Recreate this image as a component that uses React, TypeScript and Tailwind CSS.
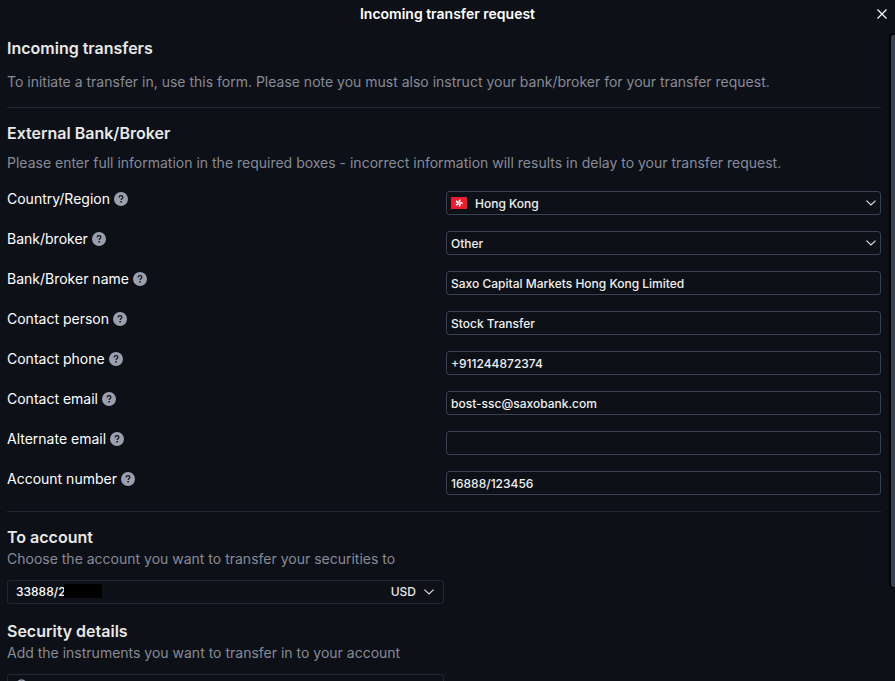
import { useState } from "react";
import type { ReactNode } from "react";

type Field = {
  id: string;
  label: string;
  value: string;
  type?: string;
};

const fields: Field[] = [
  { id: "broker-name", label: "Bank/Broker name", value: "Saxo Capital Markets Hong Kong Limited" },
  { id: "contact-person", label: "Contact person", value: "Stock Transfer" },
  { id: "contact-phone", label: "Contact phone", value: "+911244872374", type: "tel" },
  { id: "contact-email", label: "Contact email", value: "bost-ssc@saxobank.com", type: "email" },
  { id: "alternate-email", label: "Alternate email", value: "", type: "email" },
  { id: "account-number", label: "Account number", value: "16888/123456" },
];

const controlClass =
  "block h-6 w-full appearance-none rounded-[3px] border border-[#384152] bg-transparent px-1 text-xs font-medium text-[#f0f0f0] outline-none focus:border-[#5b6b85]";

function HelpIcon() {
  return (
    <svg width="14" height="14" viewBox="0 0 14 14" fill="none" aria-hidden="true">
      <circle cx="7" cy="7" r="7" fill="#9a9fae" />
      <path
        d="M5.1 5.5C5.1 4.3 5.9 3.7 7 3.7s1.9.6 1.9 1.6C8.9 6.5 7.2 6.5 7.2 8"
        stroke="#0d1017"
        strokeWidth="1.2"
      />
      <rect x="6.4" y="9" width="1.5" height="1.5" fill="#0d1017" />
    </svg>
  );
}

function Chevron() {
  return (
    <svg width="10" height="6" viewBox="0 0 10 6" fill="none" aria-hidden="true">
      <path d="M.4.6 5 5l4.6-4.4" stroke="#e0e0e0" strokeWidth="1.2" />
    </svg>
  );
}

function HongKongFlag() {
  return (
    <svg width="16" height="12" viewBox="0 0 16 12" aria-hidden="true">
      <rect width="16" height="12" fill="#ec1b2e" />
      <g fill="#fff">
        {[20, 92, 164, 236, 308].map((angle) => (
          <path
            key={angle}
            d="M8 5.8C6.2 4.8 6.2 2.5 8.8 2 8 3.2 9.400 4.200 8 5.800z"
            transform={`rotate(${angle} 8 6)`}
          />
        ))}
      </g>
    </svg>
  );
}

function Row({ id, label, children }: { id: string; label: string; children: ReactNode }) {
  return (
    <div className="grid grid-cols-2 gap-1">
      <div className="flex h-4 items-center gap-1">
        <label htmlFor={id} className="text-sm text-white">
          {label}
        </label>
        <button type="button" aria-label={`Help: ${label}`}>
          <HelpIcon />
        </button>
      </div>
      {children}
    </div>
  );
}

export default function App() {
  const [values, setValues] = useState<Record<string, string>>(
    Object.fromEntries(fields.map((f) => [f.id, f.value]))
  );

  return (
    <div className="flex h-screen flex-col overflow-hidden bg-[#0d1017] font-['Inter',sans-serif] text-[#e8e8e8]">
      {/* Title bar */}
      <header className="grid h-7 shrink-0 grid-cols-[1fr_auto_1fr] items-center">
        <h1 className="col-start-2 text-sm font-semibold text-white">Incoming transfer request</h1>
        <button type="button" aria-label="Close" className="mr-2 justify-self-end">
          <svg width="10" height="10" viewBox="0 0 10 10" fill="none">
            <path d="M.5.5l9 9M9.5.5l-9 9" stroke="#fff" strokeWidth="1.2" />
          </svg>
        </button>
      </header>

      <div className="flex min-h-0 flex-1">
        <main className="min-w-0 flex-1 overflow-hidden pr-2 pl-[7px]">
          <section className="border-b border-[#1e2734] pt-2 pb-[15px]">
            <h2 className="text-base font-semibold">Incoming transfers</h2>
            <p className="mt-3 text-sm text-[#878b98]">
              To initiate a transfer in, use this form. Please note you must also instruct your bank/broker for your
              transfer request.
            </p>
          </section>

          <section className="border-b border-[#1e2734] pt-[13px] pb-4">
            <h2 className="text-base font-semibold">External Bank/Broker</h2>
            <p className="mt-2 text-sm text-[#878b98]">
              Please enter full information in the required boxes - incorrect information will results in delay to your
              transfer request.
            </p>

            <form className="mt-[18px] flex flex-col gap-4">
              <Row id="country" label="Country/Region">
                <div className="relative">
                  <select id="country" className={`${controlClass} pt-0.5 pl-7`}>
                    <option>Hong Kong</option>
                  </select>
                  <span className="pointer-events-none absolute inset-y-0 left-[5px] flex items-center">
                    <HongKongFlag />
                  </span>
                  <span className="pointer-events-none absolute inset-y-0 right-[5px] flex items-center">
                    <Chevron />
                  </span>
                </div>
              </Row>
              <Row id="broker" label="Bank/broker">
                <div className="relative">
                  <select id="broker" className={`${controlClass} pt-0.5`}>
                    <option>Other</option>
                  </select>
                  <span className="pointer-events-none absolute inset-y-0 right-[5px] flex items-center">
                    <Chevron />
                  </span>
                </div>
              </Row>
              {fields.map((f) => (
                <Row key={f.id} id={f.id} label={f.label}>
                  <input
                    id={f.id}
                    type={f.type ?? "text"}
                    value={values[f.id]}
                    onChange={(e) => setValues({ ...values, [f.id]: e.target.value })}
                    className={controlClass}
                  />
                </Row>
              ))}
            </form>
          </section>

          <section className="pt-[13px]">
            <h2 className="text-base font-semibold">
              <label htmlFor="to-account">To account</label>
            </h2>
            <p className="text-sm text-[#878b98]">Choose the account you want to transfer your securities to</p>
            <div className="relative mt-[11px] w-1/2">
              <select
                id="to-account"
                className="block h-6 w-full appearance-none rounded-[3px] border border-[#1e2734] bg-transparent px-2 text-xs font-medium text-white outline-none"
              >
                <option>33888/2</option>
              </select>
              {/* Hidden part of the account number */}
              <span className="pointer-events-none absolute top-1 left-[57px] h-3.5 w-[38px] bg-black" />
              <span className="pointer-events-none absolute inset-y-0 right-2.5 flex items-center gap-2 text-xs font-medium">
                USD
                <Chevron />
              </span>
            </div>
          </section>

          <section className="pt-[15px]">
            <h2 className="text-base font-semibold">
              <label htmlFor="instrument">Security details</label>
            </h2>
            <p className="text-sm text-[#878b98]">Add the instruments you want to transfer in to your account</p>
            <div className="mt-[11px] flex h-6 w-1/2 items-center gap-2 rounded-[3px] border border-[#1e2734] px-2">
              <svg width="14" height="14" viewBox="0 0 14 14" fill="none" aria-hidden="true">
                <circle cx="5.5" cy="5.5" r="4.5" stroke="#9a9fae" strokeWidth="1.5" />
                <path d="M9 9l4 4" stroke="#9a9fae" strokeWidth="1.5" />
              </svg>
              <input id="instrument" type="search" className="min-w-0 flex-1 bg-transparent text-xs outline-none" />
            </div>
          </section>
        </main>

        {/* Scroll bar */}
        <div className="mt-[5px] h-[85%] w-1.5 shrink-0 rounded-l-sm bg-black pt-0.5 pb-px pl-0.5" aria-hidden="true">
          <div className="h-full rounded-l-xs bg-[#384152]" />
        </div>
      </div>
    </div>
  );
}
